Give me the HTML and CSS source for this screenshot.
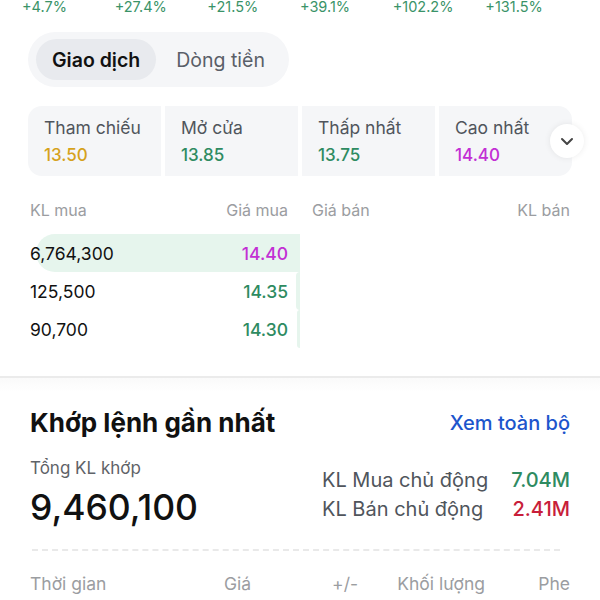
FILE: index.html
```html
<!DOCTYPE html>
<html lang="vi">
<head>
  <meta charset="UTF-8" />
  <meta name="viewport" content="width=device-width, initial-scale=1.0"/>
  <title>Giao dịch</title>
  <link rel="stylesheet" href="styles.css">
</head>
<body>

  <div class="perf-row">
    <span>+4.7%</span>
    <span>+27.4%</span>
    <span>+21.5%</span>
    <span>+39.1%</span>
    <span>+102.2%</span>
    <span>+131.5%</span>
  </div>

  <div class="tabs">
    <button class="tab active">Giao dịch</button>
    <button class="tab">Dòng tiền</button>
  </div>

  <div class="stats-wrap">
    <div class="stats">
      <div class="stat">
        <div class="stat-label">Tham chiếu</div>
        <div class="stat-value ref">13.50</div>
      </div>
      <div class="stat">
        <div class="stat-label">Mở cửa</div>
        <div class="stat-value up">13.85</div>
      </div>
      <div class="stat">
        <div class="stat-label">Thấp nhất</div>
        <div class="stat-value up">13.75</div>
      </div>
      <div class="stat">
        <div class="stat-label">Cao nhất</div>
        <div class="stat-value ceil">14.40</div>
      </div>
    </div>
    <button class="expand-btn" aria-label="Mở rộng">
      <svg width="14" height="9" viewBox="0 0 14 9"><path d="M2 2 L7 7 L12 2" fill="none" stroke="#444" stroke-width="2" stroke-linecap="round" stroke-linejoin="round"/></svg>
    </button>
  </div>

  <div class="book">
    <div class="book-head">
      <div class="side buy"><span>KL mua</span><span>Giá mua</span></div>
      <div class="side sell"><span>Giá bán</span><span>KL bán</span></div>
    </div>
    <div class="book-body">
      <div class="side-col buy-col">
        <div class="book-row">
          <div class="depth" style="width: 264px"></div>
          <span class="vol">6,764,300</span>
          <span class="price ceil">14.40</span>
        </div>
        <div class="book-row">
          <div class="depth" style="width: 4px"></div>
          <span class="vol">125,500</span>
          <span class="price up">14.35</span>
        </div>
        <div class="book-row">
          <div class="depth" style="width: 3px"></div>
          <span class="vol">90,700</span>
          <span class="price up">14.30</span>
        </div>
      </div>
      <div class="side-col sell-col"></div>
    </div>
  </div>

  <div class="section-divider"></div>

  <div class="matched">
    <div class="matched-head">
      <h3>Khớp lệnh gần nhất</h3>
      <a href="#" class="see-all">Xem toàn bộ</a>
    </div>

    <div class="matched-summary">
      <div class="total">
        <div class="total-label">Tổng KL khớp</div>
        <div class="total-value">9,460,100</div>
      </div>
      <div class="active-vol">
        <div class="active-row"><span>KL Mua chủ động</span><span class="up">7.04M</span></div>
        <div class="active-row"><span>KL Bán chủ động</span><span class="down">2.41M</span></div>
      </div>
    </div>

    <div class="dashed"></div>

    <div class="trade-head">
      <span class="left">Thời gian</span>
      <span>Giá</span>
      <span>+/-</span>
      <span>Khối lượng</span>
      <span>Phe</span>
    </div>
  </div>

</body>
</html>
```

FILE: styles.css
```css
body {
  margin: 0;
  font-family: Inter, "Noto Sans", sans-serif;
  background: #fff;
  color: #111;
  overflow: hidden;
}

.up { color: #2e8b61; }
.down { color: #c81e3a; }
.ref { color: #d6a21c; }
.ceil { color: #c22fd4; }

.perf-row {
  display: grid;
  grid-template-columns: repeat(6, 1fr);
  padding: 0 22px;
  height: 13px;
  line-height: 13px;
  font-size: 14.5px;
  color: #3a9368;
}

.tabs {
  display: flex;
  width: fit-content;
  margin: 19px 0 0 28px;
  padding: 7px 8px;
  gap: 4px;
  background: #f5f6f8;
  border-radius: 28px;
}

.tab {
  border: none;
  background: transparent;
  font-family: inherit;
  font-size: 19.5px;
  height: 41px;
  padding: 0 16px;
  border-radius: 21px;
  color: #5a5f68;
}

.tab.active {
  background: #e8eaee;
  color: #111;
  font-weight: 600;
}

.stats-wrap {
  position: relative;
  margin: 19px 0 0 28px;
  overflow: hidden;
}

.stats {
  display: grid;
  grid-template-columns: repeat(4, 133px);
  gap: 4px;
}

.stat {
  background: #f5f6f8;
  height: 70px;
  padding: 0 16px;
  box-sizing: border-box;
  display: flex;
  flex-direction: column;
  justify-content: center;
  gap: 7px;
}

.stat:first-child { border-radius: 14px 0 0 14px; }
.stat:last-child { border-radius: 0 14px 14px 0; }

.stat-label {
  font-size: 17.5px;
  color: #50555c;
}

.stat-value {
  font-size: 17px;
  font-weight: 500;
}

.expand-btn {
  position: absolute;
  top: 18px;
  left: 522px;
  width: 34px;
  height: 34px;
  border-radius: 50%;
  border: none;
  background: #fff;
  box-shadow: 0 0 6px rgba(0,0,0,0.08);
  display: flex;
  align-items: center;
  justify-content: center;
  padding: 0;
}

.book {
  padding: 0 30px;
}

.book-head {
  display: grid;
  grid-template-columns: 1fr 1fr;
  margin-top: 24px;
  font-size: 16px;
  line-height: 20px;
  color: #9b9da1;
}

.side {
  display: flex;
  justify-content: space-between;
}

.side.buy { padding-right: 12px; }
.side.sell { padding-left: 12px; }

.book-body {
  display: grid;
  grid-template-columns: 1fr 1fr;
  margin-top: 14px;
}

.book-row {
  position: relative;
  display: flex;
  justify-content: space-between;
  align-items: center;
  height: 38px;
  padding-right: 12px;
  font-size: 17.5px;
}

.book-row span {
  position: relative;
}

.depth {
  position: absolute;
  right: 0;
  top: 0;
  bottom: 0;
  background: #e6f5ed;
  border-radius: 19px 0 0 19px;
}

.price { font-weight: 500; }

.section-divider {
  margin-top: 28px;
  height: 14px;
  border-top: 2px solid #ebebeb;
  background: linear-gradient(#fafafa, #fff);
}

.matched {
  padding: 0 30px;
}

.matched-head {
  display: flex;
  justify-content: space-between;
  align-items: center;
  margin-top: 16px;
}

.matched-head h3 {
  margin: 0;
  font-size: 26px;
  font-weight: 700;
  line-height: 30px;
}

.see-all {
  color: #1d55cc;
  text-decoration: none;
  font-size: 20px;
  font-weight: 500;
}

.matched-summary {
  display: flex;
  justify-content: space-between;
  margin-top: 20px;
}

.total-label {
  font-size: 17px;
  color: #5f6368;
  line-height: 20px;
}

.total-value {
  font-size: 35.5px;
  font-weight: 500;
  line-height: 40px;
  margin-top: 10px;
}

.active-vol {
  width: 248px;
  margin-top: 8px;
}

.active-row {
  display: flex;
  justify-content: space-between;
  font-size: 20px;
  line-height: 29px;
  color: #50555c;
}

.active-row span:last-child { font-weight: 500; }
.active-row .up { color: #2e8b61; }
.active-row .down { color: #c81e3a; }

.dashed {
  margin: 21px 10px 0 2px;
  border-top: 2px dashed #e9e9e9;
}

.trade-head {
  display: grid;
  grid-template-columns: 150px 71px 107px 127px 85px;
  margin-top: 23px;
  font-size: 17.5px;
  line-height: 20px;
  color: #9b9da1;
  text-align: right;
}

.trade-head .left { text-align: left; }
```
